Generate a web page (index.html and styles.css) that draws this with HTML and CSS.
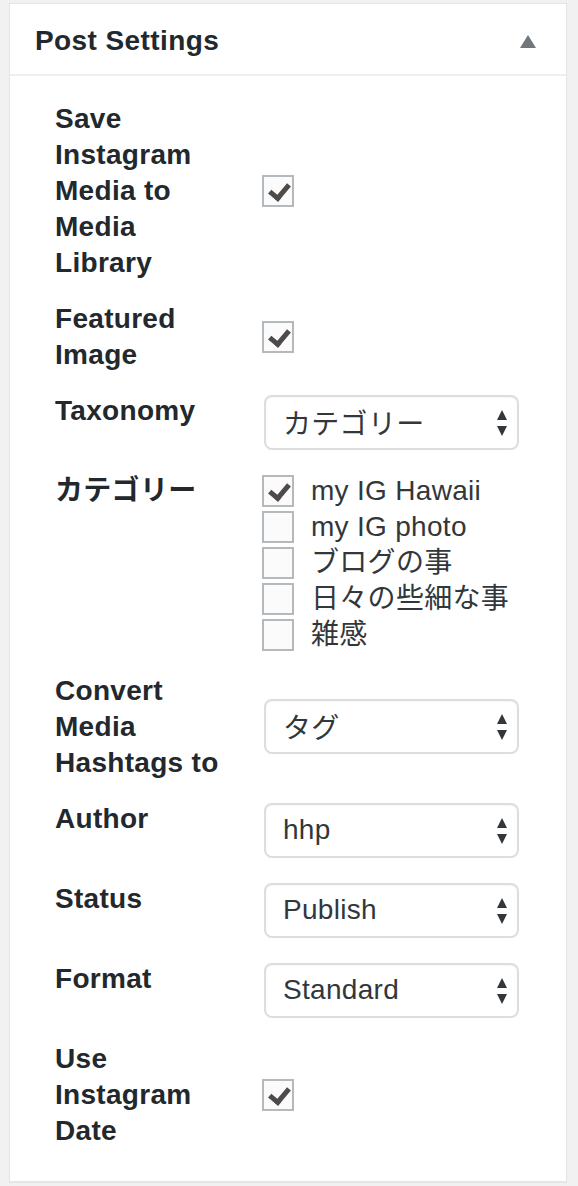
FILE: index.html
```html
<!DOCTYPE html>
<html lang="ja">
<head>
<meta charset="utf-8">
<title>Post Settings</title>
<link rel="stylesheet" href="styles.css">
</head>
<body>
<div class="panel">
  <div class="panel-head">
    <h2 class="panel-title">Post Settings</h2>
    <span class="toggle" aria-hidden="true"></span>
  </div>
  <div class="panel-body">
    <div class="row">
      <div class="label">Save Instagram Media to Media Library</div>
      <div class="field"><span class="cb checked"></span></div>
    </div>
    <div class="row">
      <div class="label">Featured Image</div>
      <div class="field"><span class="cb checked"></span></div>
    </div>
    <div class="row">
      <div class="label">Taxonomy</div>
      <div class="field field-top"><div class="select">カテゴリー<span class="arrows"></span></div></div>
    </div>
    <div class="row">
      <div class="label">カテゴリー</div>
      <div class="field field-top">
        <ul class="checklist">
          <li><span class="cb checked"></span><span class="item">my IG Hawaii</span></li>
          <li><span class="cb"></span><span class="item">my IG photo</span></li>
          <li><span class="cb"></span><span class="item">ブログの事</span></li>
          <li><span class="cb"></span><span class="item">日々の些細な事</span></li>
          <li><span class="cb"></span><span class="item">雑感</span></li>
        </ul>
      </div>
    </div>
    <div class="row">
      <div class="label">Convert Media Hashtags to</div>
      <div class="field"><div class="select">タグ<span class="arrows"></span></div></div>
    </div>
    <div class="row">
      <div class="label">Author</div>
      <div class="field field-top"><div class="select">hhp<span class="arrows"></span></div></div>
    </div>
    <div class="row">
      <div class="label">Status</div>
      <div class="field field-top"><div class="select">Publish<span class="arrows"></span></div></div>
    </div>
    <div class="row">
      <div class="label">Format</div>
      <div class="field field-top"><div class="select">Standard<span class="arrows"></span></div></div>
    </div>
    <div class="row">
      <div class="label">Use Instagram Date</div>
      <div class="field"><span class="cb checked"></span></div>
    </div>
  </div>
</div>
</body>
</html>
```
FILE: styles.css
```css
html, body {
  margin: 0;
  padding: 0;
  background: #f1f1f1;
}
body {
  font-family: "Liberation Sans", "Noto Sans CJK JP", sans-serif;
  color: #23282d;
  padding: 3px 11px 4px 9px;
}
.panel {
  background: #fff;
  border: 1px solid #e5e5e5;
  box-shadow: 0 1px 1px rgba(0,0,0,0.04);
  height: 1179px;
  box-sizing: border-box;
}
.panel-head {
  display: flex;
  align-items: center;
  justify-content: space-between;
  height: 70px;
  border-bottom: 2px solid #eeeeee;
  padding: 0 30px 0 25px;
}
.panel-title {
  margin: 0;
  font-size: 28px;
  font-weight: 700;
  line-height: 36px;
  letter-spacing: 0.4px;
  color: #23282d;
  padding-top: 4px;
}
.toggle {
  width: 0;
  height: 0;
  border-left: 8px solid transparent;
  border-right: 8px solid transparent;
  border-bottom: 13px solid #72777c;
  margin-top: 4px;
}
.panel-body {
  padding: 25px 0 0 45px;
  display: flex;
  flex-direction: column;
  gap: 20px;
}
.row {
  display: flex;
  align-items: stretch;
}
.label {
  width: 178px;
  flex: none;
  margin-right: 29px;
  font-size: 28px;
  font-weight: 700;
  line-height: 36px;
  letter-spacing: 0.3px;
  color: #23282d;
}
.field {
  flex: 1;
  display: flex;
  align-items: center;
}
.field-top {
  align-items: flex-start;
}
.cb {
  display: inline-block;
  width: 32px;
  height: 32px;
  box-sizing: border-box;
  border: 2px solid #b4b9be;
  background: #fbfbfb;
  position: relative;
  flex: none;
}
.cb.checked::after {
  content: "";
  position: absolute;
  left: 9px;
  top: 3px;
  width: 8px;
  height: 15px;
  border-right: 5px solid #4e4a4a;
  border-bottom: 5px solid #4e4a4a;
  transform: rotate(40deg);
}
.select {
  margin: 2px 0 3px 2px;
  width: 255px;
  height: 55px;
  box-sizing: border-box;
  border: 2px solid #dddddd;
  border-radius: 8px;
  background: #fff;
  padding: 0 0 2px 17px;
  display: flex;
  align-items: center;
  justify-content: space-between;
  font-size: 28px;
  letter-spacing: 0.3px;
  color: #32373c;
  font-family: "Liberation Sans", "Noto Sans CJK JP", sans-serif;
  box-shadow: inset 0 1px 2px rgba(0,0,0,0.04);
}
.arrows {
  position: relative;
  width: 10px;
  height: 26px;
  margin-right: 10px;
  margin-top: 2px;
}
.arrows::before,
.arrows::after {
  content: "";
  position: absolute;
  left: 0;
  width: 0;
  height: 0;
  border-left: 5px solid transparent;
  border-right: 5px solid transparent;
}
.arrows::before {
  top: 0;
  border-bottom: 10px solid #32373c;
}
.arrows::after {
  bottom: 0;
  border-top: 10px solid #32373c;
}
.checklist {
  list-style: none;
  margin: 0;
  padding: 0;
}
.checklist li {
  display: flex;
  align-items: center;
  height: 36px;
}
.item {
  margin-left: 17px;
  font-size: 28px;
  letter-spacing: 0.3px;
  color: #32373c;
  line-height: 36px;
}
```
